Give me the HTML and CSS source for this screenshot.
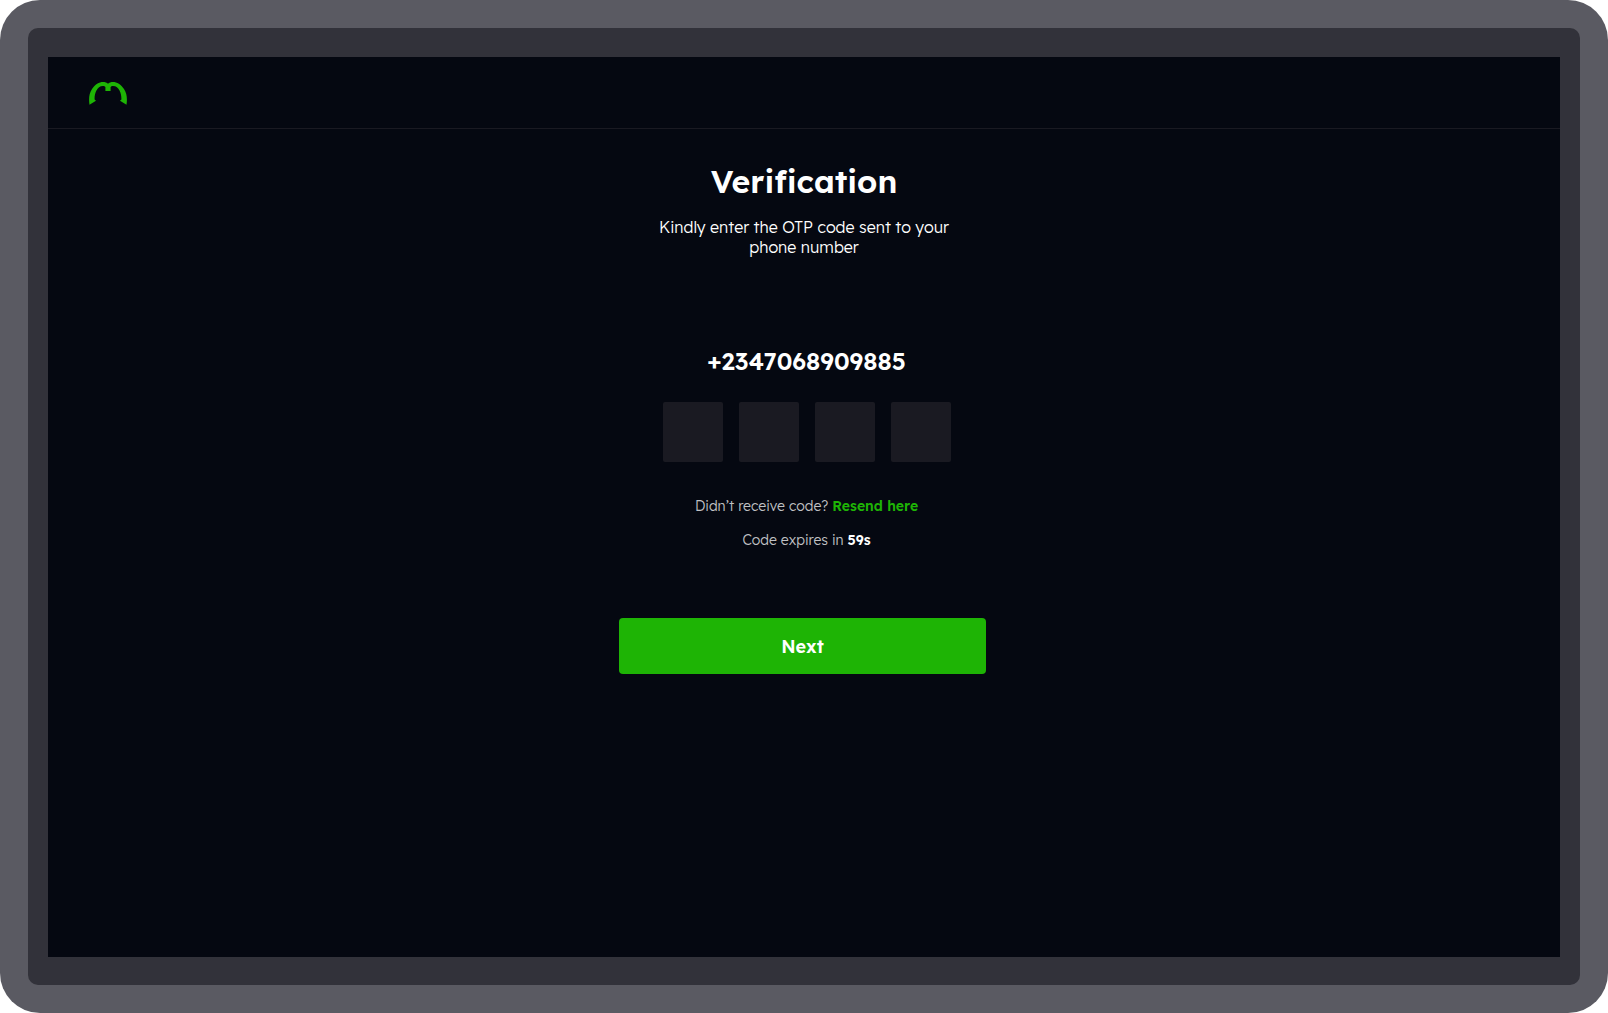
FILE: index.html
```html
<!DOCTYPE html>
<html lang="en">
<head>
<meta charset="utf-8">
<meta name="viewport" content="width=device-width, initial-scale=1">
<title>Verification</title>
<link rel="stylesheet" href="styles.css">
</head>
<body>
<div class="device">
  <div class="bezel">
    <div class="screen">
      <header class="header">
        <a class="logo" href="#" aria-label="Home">
          <svg width="38" height="23" viewBox="0 0 38 23" aria-hidden="true">
            <path fill="#1eb405" d="M0.5 22.8C-0.4 17 0 11.500 3 7C6 2.500 10 0 14 0C16 0 18 0.600 19 1.700C20 0.600 22 0 24 0C28 0 32 2.500 35 7C38 11.500 38.400 17 37.500 22.800L31 18.800L32.400 17.500C32.600 12 30.500 4 24 3.900C22.800 3.900 22 4.400 21.600 5V9H16.400V5C16 4.400 15.200 3.900 14 3.900C7.500 4 5.400 12 5.600 17.500L7 18.800Z"/>
          </svg>
        </a>
      </header>
      <main class="content">
        <h1 class="title">Verification</h1>
        <p class="intro">Kindly enter the OTP code sent to your phone number</p>
        <form class="form">
          <div class="code">
            <p class="phone">+2347068909885</p>
            <div class="digits" role="group" aria-label="OTP code">
              <input class="digit" type="text" inputmode="numeric" maxlength="1" aria-label="Digit 1">
              <input class="digit" type="text" inputmode="numeric" maxlength="1" aria-label="Digit 2">
              <input class="digit" type="text" inputmode="numeric" maxlength="1" aria-label="Digit 3">
              <input class="digit" type="text" inputmode="numeric" maxlength="1" aria-label="Digit 4">
            </div>
            <p class="note">Didn’t receive code? <a class="resend" href="#">Resend here</a></p>
            <p class="note">Code expires in <strong class="time">59s</strong></p>
          </div>
          <button class="next" type="submit">Next</button>
        </form>
      </main>
    </div>
  </div>
</div>
</body>
</html>
```
FILE: styles.css
```css
* {
  box-sizing: border-box;
}

body {
  margin: 0;
  background: #fff;
  color: #fff;
  font-family: Lexend, Inter, sans-serif;
}

h1,
p {
  margin: 0;
}

.device {
  display: flex;
  min-height: 100vh;
  padding: 28px;
  border-radius: 40px;
  background: #5a5a62;
}

.bezel {
  display: flex;
  flex: 1;
  padding: 29px 20px 28px;
  border-radius: 10px;
  background: #32323a;
}

.screen {
  flex: 1;
  background: #050811;
}

.header {
  display: flex;
  padding: 25px 41px 23px;
  border-bottom: 1px solid #1a1a22;
}

.logo {
  display: flex;
}

.content {
  display: flex;
  flex-direction: column;
  align-items: center;
  padding: 32px 16px;
  text-align: center;
}

.title {
  font-size: 32px;
  font-weight: 600;
  line-height: 40px;
}

.intro {
  max-width: 312px;
  margin-top: 16px;
  font-size: 16px;
  font-weight: 300;
  line-height: 20px;
}

.form {
  display: flex;
  flex-direction: column;
  align-items: center;
  width: 100%;
  max-width: 370px;
  margin-top: 88px;
  padding-right: 3px;
}

.code {
  display: flex;
  flex-direction: column;
  align-items: center;
  padding-left: 8px;
}

.phone {
  font-size: 24px;
  font-weight: 600;
  line-height: 32px;
}

.digits {
  display: flex;
  gap: 16px;
  margin: 25px 0 34px;
}

.digit {
  width: 60px;
  height: 60px;
  padding: 0;
  border: 0;
  border-radius: 2px;
  background: #1a1a22;
  color: #fff;
  font: inherit;
  font-size: 24px;
  text-align: center;
}

.note {
  color: #c0c1c4;
  font-size: 14px;
  font-weight: 300;
  line-height: 20px;
}

.note + .note {
  margin-top: 14px;
}

.resend {
  color: #1eb405;
  font-weight: 600;
  text-decoration: none;
}

.time {
  color: #fff;
  font-weight: 600;
}

.next {
  width: 100%;
  height: 56px;
  margin-top: 68px;
  border: 0;
  border-radius: 4px;
  background: #1eb405;
  color: #fff;
  font: inherit;
  font-size: 18px;
  font-weight: 600;
}
```
